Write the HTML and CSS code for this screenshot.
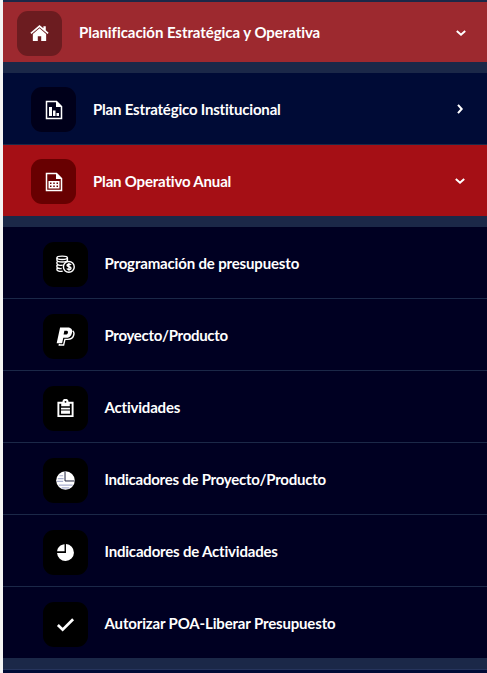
FILE: index.html
```
<!DOCTYPE html>
<html lang="es">
<head>
<meta charset="utf-8">
<title>Menú</title>
<link rel="stylesheet" href="styles.css">
</head>
<body>
<nav class="sidebar">
  <div class="item root">
    <span class="tile"><svg viewBox="0 0 20 20"><path d="M10 1 .4 9.200l1.100 1.300L10 3.300l8.500 7.200 1.100-1.300-3-2.600V2.400h-2.500v2.100z"/><path d="M10 4.500 3 10.500V18h5.200v-5h3.600v5H17v-7.500z"/></svg></span>
    <span class="label t1">Planificación Estratégica y Operativa</span>
    <svg class="chevron" viewBox="0 0 10 10"><path d="M.8 3 5 6.700 9.200 3"/></svg>
  </div>
  <div class="group">
    <div class="item second">
      <span class="tile"><svg viewBox="0 0 20 20"><path class="line" d="M2.500 1.500h10L17.500 6.500v12h-15z"/><path d="M12 1v6h6zM5 7h3v9H5zM9 10.500h2.500V16H9zM12.500 13H15v3h-2.500z"/></svg></span>
      <span class="label t2">Plan Estratégico Institucional</span>
      <svg class="chevron" viewBox="0 0 10 10"><path d="M3 .8 6.700 5 3 9.200"/></svg>
    </div>
    <div class="item second active">
      <span class="tile"><svg viewBox="0 0 20 20"><path class="line" d="M2.500 1.500h10L17.500 6.500v12h-15z"/><path fill-rule="evenodd" d="M12 1v6h6zM4.500 9h11v7.500h-11zM6 10.500V12h1.500v-1.500zM9.250 10.500V12h1.500v-1.500zM12.500 10.500V12H14v-1.500zM6 13.500V15h1.500v-1.500zM9.250 13.500V15h1.500v-1.500zM12.500 13.500V15H14v-1.500z"/></svg></span>
      <span class="label t3">Plan Operativo Anual</span>
      <svg class="chevron" viewBox="0 0 10 10"><path d="M.8 3 5 6.700 9.200 3"/></svg>
    </div>
    <div class="group leafs">
      <div class="item third">
        <span class="tile"><svg viewBox="0 0 20 20"><g class="line"><ellipse cx="6.500" cy="3" rx="5.500" ry="1.800"/><path d="M1 3v2.500c0 2.500 11 2.500 11 0V3M1 7v2c0 1.700 3.500 2.200 6 1.800M1 10.500v2c0 1.300 2.500 2 5 1.800M1 14v1.500c0 1.300 3 2 6 1.600"/><circle cx="13.500" cy="12.500" r="5.700"/></g><path class="line" d="M15.800 10.500c-.6-1.200-4.200-1.300-4.200.4 0 1.900 4.200 1 4.200 3 0 1.800-3.700 1.700-4.400.3M13.600 8.500v8"/></svg></span>
        <span class="label t4">Programación de presupuesto</span>
      </div>
      <div class="item third">
        <span class="tile"><svg viewBox="0 0 20 20"><path fill-rule="evenodd" d="M4.300.5h8c4 0 5.300 2.400 4.500 5.700-.8 3.500-3.100 5.200-6.500 5.200H7.700L6.400 17H.7zM8.800 4 8 8h1.700c1.700 0 2.700-.8 2.900-2.300.2-1.200-.5-1.700-1.900-1.700z"/><path class="line" d="M17.500 4c1.500 1.100 1.700 3 1 5-.9 2.800-3 4-6 4H9.400L8 19H3.500l.2-1.200"/></svg></span>
        <span class="label t5">Proyecto/Producto</span>
      </div>
      <div class="item third">
        <span class="tile"><svg viewBox="0 0 20 20"><path fill-rule="evenodd" d="M1.500 3h5.300a3.200 3.200 0 0 1 6.400 0h5.300v16h-17zM3.500 5v12h13V5h-2v2.500h-9V5zM10 2a1 1 0 1 0 0 2 1 1 0 0 0 0-2zM5.300 9.300h9.400v1.700H5.300zM5.300 12h9.400v3.500H5.300z"/></svg></span>
        <span class="label t6">Actividades</span>
      </div>
      <div class="item third">
        <span class="tile"><svg viewBox="0 0 20 20"><circle cx="10" cy="10" r="9.800"/><path class="shade" d="M3.500 5h4M2 8h6M1 11h6.500M3 14.800h14.500M6 17.800h8"/><path class="cut" d="M9.500.5v10h10"/></svg></span>
        <span class="label t7">Indicadores de Proyecto/Producto</span>
      </div>
      <div class="item third">
        <span class="tile"><svg viewBox="0 0 20 20"><path d="M10.500 1.100a8.900 8.900 0 1 1-9.400 9.400h9.400zM9 1.300v7.500H1.200C1.500 4.600 4.800 1.500 9 1.300z"/></svg></span>
        <span class="label t8">Indicadores de Actividades</span>
      </div>
      <div class="item third">
        <span class="tile"><svg viewBox="0 0 20 20"><path class="check" d="m2 10.500 5 5L18 4.500"/></svg></span>
        <span class="label t9">Autorizar POA-Liberar Presupuesto</span>
      </div>
    </div>
  </div>
</nav>
</body>
</html>
```
FILE: styles.css
```
* { box-sizing: border-box; }
body {
  margin: 0;
  height: 673px;
  overflow: hidden;
  background: #f4f4f4;
  font-family: Lato, sans-serif;
}
.sidebar {
  margin-left: 3px;
  height: 673px;
  padding-top: 2px;
  background: #000b36;
  box-shadow: inset 0 2px #1b2848;
}
.item {
  display: flex;
  align-items: flex-start;
  color: #fff;
}
.root { height: 60px; padding: 9px 21px 0 14px; background: #9d292f; }
.group { border-top: 11px solid #1b2848; border-bottom: 1px solid #26345c; }
.second { height: 72px; padding: 14px 22px 0 28px; background: #000b36; border-bottom: 1px solid #1b2848; }
.active { height: 71px; background: #a50f15; border-bottom: 0; }
.leafs { border-bottom: 11px solid #1b2848; }
.third { height: 72px; padding: 15px 22px 0 40px; background: #000022; border-bottom: 1px solid #1b2848; }
.third:last-child { height: 71px; border-bottom: 0; }
.tile {
  display: flex;
  align-items: center;
  justify-content: center;
  width: 45px;
  height: 45px;
  border-radius: 11px;
  background: #000;
}
.root .tile { background: #6c1c20; }
.second .tile { background: #00001a; }
.active .tile { background: #680001; }
.tile svg { width: 19px; height: 19px; fill: currentColor; }
.second .tile svg { width: 20px; height: 20px; }
.tile .line { fill: none; stroke: currentColor; stroke-width: 1.500; }
.check { fill: none; stroke: currentColor; stroke-width: 2.800; }
.cut { fill: none; stroke: #111433; stroke-width: 1; }
.shade { fill: none; stroke: #a9afcf; stroke-width: 1.300; }
.label {
  margin-left: 17px;
  line-height: 43px;
  font-size: 15px;
  font-weight: 700;
  white-space: nowrap;
}
.second .label { line-height: 45px; }
.third .label { margin-left: 16.500px; }
.t1 { letter-spacing: -0.055px; }
.t2 { letter-spacing: -0.190px; }
.t3 { letter-spacing: -0.180px; }
.t4 { letter-spacing: -0.160px; }
.t5 { letter-spacing: -0.300px; }
.t6 { letter-spacing: -0.200px; }
.t7 { letter-spacing: -0.250px; }
.t8 { letter-spacing: -0.190px; }
.t9 { letter-spacing: -0.160px; }
.chevron {
  width: 10px;
  height: 10px;
  margin: 17px 0 0 auto;
  fill: none;
  stroke: currentColor;
  stroke-width: 2;
}
```
